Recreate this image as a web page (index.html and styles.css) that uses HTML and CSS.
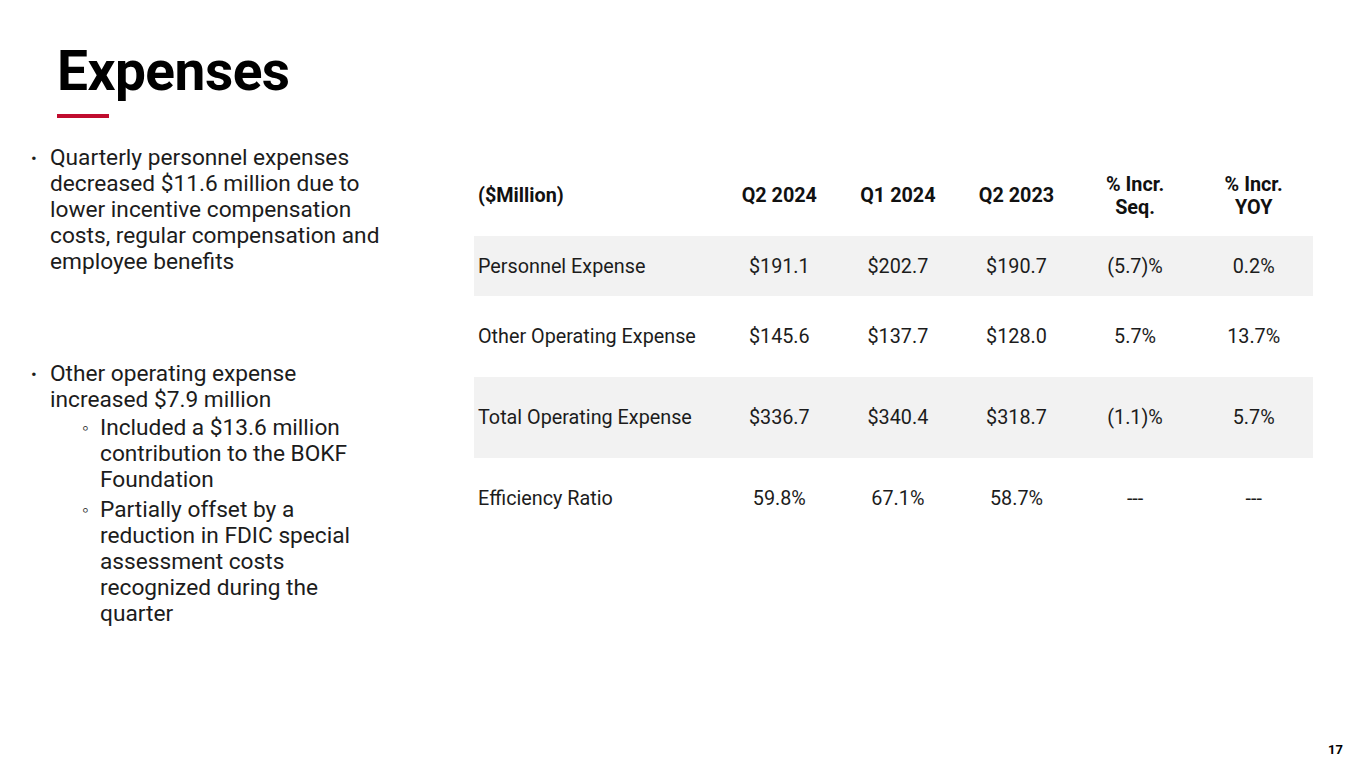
FILE: index.html
```html
<!DOCTYPE html>
<html>
<head>
<meta charset="utf-8">
<link rel="stylesheet" href="styles.css">
</head>
<body>
<div class="slide">
  <header class="head">
    <h1 class="title">Expenses</h1>
    <div class="rule"></div>
  </header>
  <main class="content">
    <section class="notes">
      <ul class="bullets">
        <li class="first">Quarterly personnel expenses decreased $11.6 million due to lower incentive compensation costs, regular compensation and employee benefits</li>
        <li class="second">Other operating expense increased $7.9 million
          <ul class="sub">
            <li>Included a $13.6 million contribution to the BOKF Foundation</li>
            <li>Partially offset by a reduction in FDIC special assessment costs recognized during the quarter</li>
          </ul>
        </li>
      </ul>
    </section>
    <section class="tablewrap">
      <table class="fin">
        <colgroup>
          <col class="c-label"><col class="c-num"><col class="c-num"><col class="c-num"><col class="c-num"><col class="c-num">
        </colgroup>
        <thead>
          <tr class="r-head">
            <th class="label">($Million)</th>
            <th>Q2 2024</th>
            <th>Q1 2024</th>
            <th>Q2 2023</th>
            <th>% Incr.<br>Seq.</th>
            <th>% Incr.<br>YOY</th>
          </tr>
        </thead>
        <tbody>
          <tr class="shade short">
            <td class="label">Personnel Expense</td>
            <td>$191.1</td><td>$202.7</td><td>$190.7</td><td>(5.7)%</td><td>0.2%</td>
          </tr>
          <tr>
            <td class="label">Other Operating Expense</td>
            <td>$145.6</td><td>$137.7</td><td>$128.0</td><td>5.7%</td><td>13.7%</td>
          </tr>
          <tr class="shade">
            <td class="label">Total Operating Expense</td>
            <td>$336.7</td><td>$340.4</td><td>$318.7</td><td>(1.1)%</td><td>5.7%</td>
          </tr>
          <tr>
            <td class="label">Efficiency Ratio</td>
            <td>59.8%</td><td>67.1%</td><td>58.7%</td><td>---</td><td>---</td>
          </tr>
        </tbody>
      </table>
    </section>
  </main>
  <div class="pagenum">17</div>
</div>
</body>
</html>
```

FILE: styles.css
```css
* { box-sizing: border-box; }
html, body { margin: 0; padding: 0; background: #ffffff; }
body { font-family: Roboto, "Liberation Sans", Arial, sans-serif; color: #000; }

.slide {
  position: relative;
  width: 1365px;
  height: 769px;
  overflow: hidden;
  background: #fff;
}

.head { padding: 43px 0 0 57px; }
.title {
  margin: 0;
  font-size: 55px;
  line-height: 56px;
  font-weight: 700;
  letter-spacing: -0.5px;
  color: #000;
}
.rule {
  margin-top: 15px;
  width: 52px;
  height: 4px;
  background: #c00c2e;
}

.content {
  display: flex;
  align-items: flex-start;
  margin-top: 27px;
}

.notes { width: 474px; padding-left: 31px; }
.bullets {
  list-style: none;
  margin: 0;
  padding: 0;
  font-size: 22.7px;
  line-height: 26px;
  color: #1c1c1c;
}
.bullets > li {
  position: relative;
  padding-left: 19px;
  width: 359px;
}
.bullets > li::before {
  content: "•";
  position: absolute;
  left: 0;
  top: 0;
  font-size: 17px;
}
.bullets > li.second { margin-top: 86px; }

.sub {
  list-style: none;
  margin: 2px 0 0 0;
  padding: 0 0 0 50px;
}
.sub li {
  position: relative;
  padding-left: 0;
  width: 262px;
  margin-bottom: 4px;
}
.sub li::before {
  content: "◦";
  position: absolute;
  left: -18px;
  top: 0;
  font-size: 19px;
}

.tablewrap { padding-top: 10px; }
.fin {
  border-collapse: collapse;
  width: 839px;
  font-size: 19.8px;
  color: #1c1c1c;
}
.c-label { width: 246px; }
.c-num { width: 118.6px; }
.fin th, .fin td {
  padding: 0 4px;
  text-align: center;
  vertical-align: middle;
}
.fin th { font-weight: 700; line-height: 23px; height: 81px; color: #111; }
.fin td { height: 81px; }
.fin .label { text-align: left; }
.fin tr.short td { height: 60px; }
.fin tr.shade td { background: #f2f2f2; }

.pagenum {
  position: absolute;
  right: 22px;
  bottom: 12px;
  font-size: 13px;
  font-weight: 700;
}
```
